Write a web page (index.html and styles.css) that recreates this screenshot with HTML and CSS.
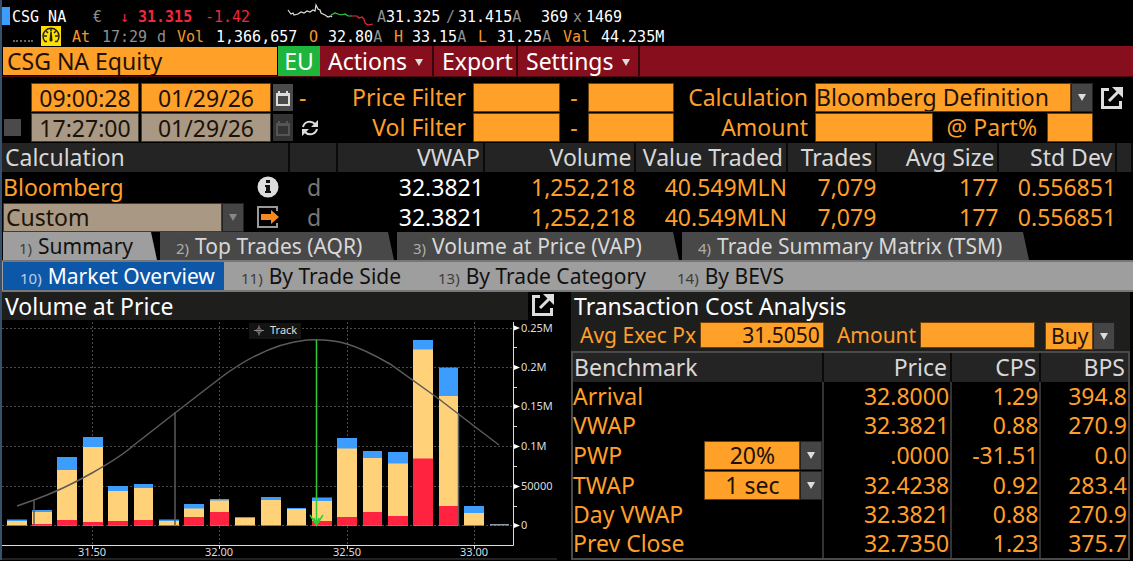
FILE: index.html
```
<!DOCTYPE html>
<html lang="en">
<head>
  <meta charset="UTF-8" />
  <title>CSG NA Equity - VWAP</title>
  <link rel="stylesheet" href="styles.css">
</head>
<body>
  <div class="app">
    <!-- Quote header -->
    <header class="quote">
      <div class="quote-line line-1">
        <span class="marker"></span>
        <span class="white">CSG NA</span>
        <span>€</span>
        <span class="red">↓</span>
        <b class="red">31.315</b>
        <span class="red">-1.42</span>
        <svg class="spark" width="86" height="24" viewBox="287 3 86 24" fill="none" stroke-width="1.2">
          <path stroke="#ddd" d="M288 10l3 4 2-1 1 2 4-1 3-2 3 1 3-2 3 1 3-2 2 1 1-6 2 4 2 1 1 3 4 2 3 2 3-1 1 1"/>
          <path stroke="#2fd04a" d="M331 15l4-2 3 1 3 1 4-1 3 2 4 0"/>
          <path stroke="#f0273f" d="M352 16h5l2 2 3-1 2 2 1 4 3 2 5-1"/>
        </svg>
        <span>A<span class="white">31.325</span></span>
        <span>/</span>
        <span><span class="white">31.415</span>A</span>
        <span class="white">369</span>
        <span>x</span>
        <span class="white">1469</span>
      </div>
      <div class="quote-line line-2">
        <span class="dots"></span>
        <svg width="20" height="20" viewBox="0 0 20 20">
          <path fill="#ffdf00" d="M0 0h20v20H0z"/>
          <path fill="none" stroke="#222" stroke-width="1.500" d="M6 15.500H4A8 8 0 1 1 16 15.500H14"/>
          <path fill="none" stroke="#222" stroke-width="1.500" d="M3 10h3M14 10h3M5 5l2 2M15 5l-2 2M10 2.500v3"/>
          <path fill="#222" d="M9.300 6h1.400l.8 8a1.500 1.500 0 0 1-3 0z"/>
        </svg>
        <span class="orange">At</span>
        <span>17:29</span>
        <span>d</span>
        <span class="orange">Vol</span>
        <span class="white">1,366,657</span>
        <span class="orange">O</span>
        <span><span class="white">32.80</span>A</span>
        <span class="orange">H</span>
        <span><span class="white">33.15</span>A</span>
        <span class="orange">L</span>
        <span><span class="white">31.25</span>A</span>
        <span class="orange">Val</span>
        <span class="white">44.235M</span>
      </div>
    </header>

    <!-- Toolbar -->
    <nav class="toolbar">
      <input class="security" type="text" value="CSG NA Equity" aria-label="Security">
      <button type="button" class="region">EU</button>
      <button type="button" class="menu menu-actions">Actions <i class="caret"></i></button>
      <button type="button" class="menu menu-export">Export</button>
      <button type="button" class="menu menu-settings">Settings <i class="caret"></i></button>
    </nav>

    <!-- Filters -->
    <form class="filters">
      <span></span>
      <input class="center" type="text" value="09:00:28" aria-label="Start time">
      <input class="center" type="text" value="01/29/26" aria-label="Start date">
      <button type="button" class="cal" aria-label="Start calendar">
        <svg width="16" height="18" viewBox="0 0 16 18" fill="none" stroke="currentColor" stroke-width="2"><path d="M2 6h12v10H2zM4 2v4M12 2v4M1 5h14"/></svg>
      </button>
      <span class="dash-left">-</span>
      <label for="priceMin">Price Filter</label>
      <input type="text" id="priceMin">
      <span class="dash">-</span>
      <input type="text" aria-label="Price filter maximum">
      <label for="calcType">Calculation</label>
      <div class="drop">
        <select id="calcType"><option>Bloomberg Definition</option></select>
        <span class="arrow"><i class="caret"></i></span>
      </div>
      <a class="popout" href="#" aria-label="Open">
        <svg width="24" height="24" viewBox="0 0 24 24"><path fill="none" stroke="#ddd" stroke-width="3" d="M9 3.500H2.500v18h18V15M9 15L18 6"/><path fill="#ddd" d="M12 1h11v11z"/></svg>
      </a>

      <input type="checkbox" aria-label="Use end time">
      <input class="center muted" type="text" value="17:27:00" aria-label="End time">
      <input class="center muted" type="text" value="01/29/26" aria-label="End date">
      <button type="button" class="cal off" aria-label="End calendar">
        <svg width="16" height="18" viewBox="0 0 16 18" fill="none" stroke="currentColor" stroke-width="2"><path d="M2 6h12v10H2zM4 2v4M12 2v4M1 5h14"/></svg>
      </button>
      <button type="button" class="refresh" aria-label="Refresh">
        <svg width="18" height="18" viewBox="0 0 18 18"><path fill="none" stroke="#ddd" stroke-width="2" d="M2 8A7 7 0 0 1 14 5M16 10A7 7 0 0 1 4 13"/><path fill="#ddd" d="M17 1v7h-7zM1 17v-7h7z"/></svg>
      </button>
      <label for="volMin">Vol Filter</label>
      <input type="text" id="volMin">
      <span class="dash">-</span>
      <input type="text" aria-label="Volume filter maximum">
      <label for="amount">Amount</label>
      <div class="amounts">
        <input type="text" id="amount">
        <label for="part">@ Part%</label>
        <input type="text" id="part">
      </div>
      <span></span>
    </form>

    <!-- VWAP results -->
    <table class="results">
      <colgroup>
        <col class="c-name"><col class="c-flag"><col class="c-vwap"><col class="c-vol"><col class="c-value"><col class="c-trades"><col class="c-avg"><col class="c-dev"><col>
      </colgroup>
      <thead>
        <tr>
          <th>Calculation</th><th></th><th>VWAP</th><th>Volume</th><th>Value Traded</th><th>Trades</th><th>Avg Size</th><th>Std Dev</th><th></th>
        </tr>
      </thead>
      <tbody>
        <tr>
          <td>
            <div class="name-cell">
              <span>Bloomberg</span>
              <svg width="22" height="22" viewBox="0 0 22 22"><circle cx="11" cy="11" r="10.500" fill="#ddd"/><path fill="#111" d="M9 4h4v3H9zM8 9h5v6h1v2H8v-2h1v-4H8z"/></svg>
            </div>
          </td>
          <td>d</td><td class="white">32.3821</td><td>1,252,218</td><td>40.549MLN</td><td>7,079</td><td>177</td><td>0.556851</td><td></td>
        </tr>
        <tr>
          <td>
            <div class="name-cell">
              <div class="drop muted-drop">
                <select aria-label="Custom calculation"><option>Custom</option></select>
                <span class="arrow"><i class="caret"></i></span>
              </div>
              <svg width="22" height="22" viewBox="0 0 22 22"><path fill="none" stroke="#999" stroke-width="2" d="M20 5V1H1v20h19v-4"/><path fill="#f58a1f" d="M4 8h10V4l8 7-8 7v-4H4z"/></svg>
            </div>
          </td>
          <td>d</td><td class="white">32.3821</td><td>1,252,218</td><td>40.549MLN</td><td>7,079</td><td>177</td><td>0.556851</td><td></td>
        </tr>
      </tbody>
    </table>

    <!-- Tabs -->
    <nav class="tabs">
      <a class="tab t1 active" href="#"><small>1)</small>Summary</a>
      <a class="tab t2" href="#"><small>2)</small>Top Trades (AQR)</a>
      <a class="tab t3" href="#"><small>3)</small>Volume at Price (VAP)</a>
      <a class="tab t4" href="#"><small>4)</small>Trade Summary Matrix (TSM)</a>
    </nav>
    <nav class="subtabs">
      <a class="s1 active" href="#"><small>10)</small>Market Overview</a>
      <a class="s2" href="#"><small>11)</small>By Trade Side</a>
      <a class="s3" href="#"><small>13)</small>By Trade Category</a>
      <a class="s4" href="#"><small>14)</small>By BEVS</a>
    </nav>

    <main class="panels">
      <!-- Volume at price chart -->
      <section class="panel-chart">
        <div class="chart-head">
          <h2>Volume at Price</h2>
          <a class="popout" href="#" aria-label="Open chart">
            <svg width="24" height="24" viewBox="0 0 24 24"><path fill="none" stroke="#ddd" stroke-width="3" d="M9 3.500H2.500v18h18V15M9 15L18 6"/><path fill="#ddd" d="M12 1h11v11z"/></svg>
          </a>
        </div>
        <svg class="chart" viewBox="2 320 555 238">
          <path class="grid-line" d="M2 328.500H513M2 367.500H513M2 406.500H513M2 446.500H513M2 486.500H513M2 525.500H513M92.500 322V545M219.500 322V545M347.500 322V545M474.500 322V545"/>
          <!-- bars: blue, then yellow, then red on top -->
          <path fill="#3c9dff" d="M7 519.500h20v6h-20zM32 510h20v15.500h-20zM57 457h20v68.500h-20zM83 437h20v88.500h-20zM108 486h20v39.500h-20zM134 484h19v41.500h-19zM159 519.500h20v6h-20zM184 504h20v21.500h-20zM210 499h19v26.500h-19zM235 517h20v8.500h-20zM261 497h20v28.500h-20zM287 508h19v17.500h-19zM312 497.500h20v28h-20zM337 438h20v87.500h-20zM363 451h19v74.500h-19zM388 452h20v73.500h-20zM413 340h20v185.500h-20zM439 367.500h19v158h-19zM464 506h20v19.500h-20z"/>
          <path fill="#8e9cae" d="M490 524h19v1.500h-19z"/>
          <path fill="#ffd178" d="M7 521h20v4.500h-20zM32 512h20v13.500h-20zM57 470h20v55.500h-20zM83 447h20v78.500h-20zM108 491h20v34.500h-20zM134 488h19v37.500h-19zM159 521h20v4.500h-20zM184 508.500h20v17h-20zM210 500.500h19v25h-19zM235 518h20v7.500h-20zM261 500h20v25.500h-20zM287 509h19v16.500h-19zM312 501h20v24.500h-20zM337 448.500h20v77h-20zM363 458h19v67.500h-19zM388 463.500h20v62h-20zM413 349.500h20v176h-20zM439 396h19v129.500h-19zM464 513h20v12.500h-20z"/>
          <path fill="#ff2340" d="M7 525h20v.5h-20zM32 524h20v1.500h-20zM57 520h20v5.500h-20zM83 522h20v3.500h-20zM108 521h20v4.500h-20zM134 520h19v5.500h-19zM159 525h20v.5h-20zM184 517h20v8.500h-20zM210 512h19v13.500h-19zM235 525h20v.5h-20zM261 525h20v.5h-20zM287 525h19v.5h-19zM312 521h20v4.500h-20zM337 517h20v8.500h-20zM363 512h19v13.500h-19zM388 516h20v9.500h-20zM413 458.500h20v67h-20zM439 506h19v19.500h-19zM464 525h20v.5h-20z"/>
          <path class="curve" d="M17 506L34 500Q62 490 92 473T134 445L175 413 219 379Q265 344 307 340 330 339 347 344T390 364L439 399 474 426 499 445"/>
          <path class="curve" d="M34 500V525M175 412V525M458.500 413V525"/>
          <path fill="none" stroke="#2fca35" stroke-width="1.500" d="M316.500 340V525M310 515l6.500 10 6.500-10M314 518l2.500 7 2.500-7"/>
          <path class="axis" d="M2 545.500H513.500V322M513 347.500h4M513 387.500h4M513 426.500h4M513 466.500h4M513 506.500h4M92.500 545v4M219.500 545v4M347.500 545v4M474.500 545v4"/>
          <path fill="#fff" d="M514 325.500l6 2.500-6 2.500zM514 365l6 2.500-6 2.500zM514 404l6 2.500-6 2.500zM514 444l6 2.500-6 2.500zM514 484l6 2.500-6 2.500zM514 523l6 2.500-6 2.500z"/>
          <rect x="249" y="323" width="52" height="16" fill="#141414"/>
          <path fill="none" stroke="#888" d="M254 330.500h10M259 325.500v10M256 330.500l3-3 3 3-3 3z"/>
          <g class="chart-text">
            <text x="270" y="334">Track</text>
            <text x="521" y="332">0.25M</text>
            <text x="521" y="371">0.2M</text>
            <text x="521" y="410">0.15M</text>
            <text x="521" y="450">0.1M</text>
            <text x="521" y="490">50000</text>
            <text x="521" y="529">0</text>
          </g>
          <g class="chart-text middle">
            <text x="92" y="556">31.50</text>
            <text x="219" y="556">32.00</text>
            <text x="347" y="556">32.50</text>
            <text x="474" y="556">33.00</text>
          </g>
        </svg>
      </section>

      <!-- Transaction cost analysis -->
      <section class="panel-tca">
        <h2>Transaction Cost Analysis</h2>
        <form class="tca-form">
          <label for="execPx">Avg Exec Px</label>
          <input class="px" type="text" id="execPx" value="31.5050">
          <label for="tcaAmount">Amount</label>
          <input class="amt" type="text" id="tcaAmount">
          <div class="drop side">
            <select aria-label="Side"><option>Buy</option></select>
            <span class="arrow"><i class="caret"></i></span>
          </div>
        </form>
        <table class="tca">
          <colgroup><col class="c-bench"><col class="c-price"><col class="c-cps"><col></colgroup>
          <thead>
            <tr><th>Benchmark</th><th>Price</th><th>CPS</th><th>BPS</th></tr>
          </thead>
          <tbody>
            <tr><td>Arrival</td><td>32.8000</td><td>1.29</td><td>394.8</td></tr>
            <tr><td>VWAP</td><td>32.3821</td><td>0.88</td><td>270.9</td></tr>
            <tr class="pick">
              <td>
                <div class="bench-cell">
                  <label for="pwp">PWP</label>
                  <div class="drop">
                    <select id="pwp"><option>20%</option></select>
                    <span class="arrow"><i class="caret"></i></span>
                  </div>
                </div>
              </td>
              <td>.0000</td><td>-31.51</td><td>0.0</td>
            </tr>
            <tr class="pick">
              <td>
                <div class="bench-cell">
                  <label for="twap">TWAP</label>
                  <div class="drop">
                    <select id="twap"><option>1 sec</option></select>
                    <span class="arrow"><i class="caret"></i></span>
                  </div>
                </div>
              </td>
              <td>32.4238</td><td>0.92</td><td>283.4</td>
            </tr>
            <tr><td>Day VWAP</td><td>32.3821</td><td>0.88</td><td>270.9</td></tr>
            <tr><td>Prev Close</td><td>32.7350</td><td>1.23</td><td>375.7</td></tr>
          </tbody>
        </table>
      </section>
    </main>
  </div>
</body>
</html>
```
FILE: styles.css
```
* {
  box-sizing: border-box;
}
body {
  margin: 0;
  background: #000;
  color: #ff9f2a;
  font-family: "Noto Sans", sans-serif;
  font-size: 23px;
  line-height: 29px;
}
.app {
  border-left: 2px solid #36506e;
}
a {
  color: inherit;
  text-decoration: none;
}
input,
select,
button {
  font: inherit;
  margin: 0;
  border: 0;
  border-radius: 0;
  padding: 0;
  min-width: 0;
}
input[type="text"],
select {
  background: #ffa028;
  color: #1c1206;
  border: 1px solid #6b3f0c;
  height: 29px;
  line-height: 27px;
  width: 100%;
}
h2 {
  margin: 0;
  font-size: 23px;
  font-weight: normal;
  line-height: 29px;
  color: #fff;
  padding-left: 3px;
  background: #1e1e1d;
}
svg {
  display: block;
}
.white { color: #fff; }
.orange { color: #f7962b; }
.red { color: #f0273f; }

/* quote header */
.quote {
  font-family: "DejaVu Sans Mono", monospace;
  font-size: 15px;
  line-height: 20px;
  color: #8f8f8f;
  height: 46px;
  padding-top: 7px;
}
.quote-line {
  display: grid;
  height: 20px;
  white-space: nowrap;
}
.line-1 {
  grid-template-columns: 10px 81px 27px 18px 67px 82px 90px 69px 12px 83px 32px 13px auto;
}
.line-2 {
  grid-template-columns: 39px 31px 30px 55px 20px 39px 93px 19px 66px 18px 66px 19px 66px 38px auto;
}
.line-2 svg {
  margin-top: -1px;
}
.marker {
  width: 8px;
  height: 18px;
  background: #3c9dff;
}
.spark {
  margin-top: -4px;
}
.dots {
  width: 20px;
  margin-left: 11px;
  border-bottom: 2px dotted #666;
  height: 15px;
}

/* toolbar */
.toolbar {
  display: flex;
  background: #870f1d;
  border-bottom: 1px solid #4d0a12;
  height: 31px;
}
.toolbar input.security {
  width: 276px;
  height: 30px;
  border: 1px solid #000;
  padding-left: 4px;
}
.toolbar button {
  color: #fff;
  background: #870f1d;
  text-align: left;
  line-height: 29px;
}
.toolbar .region {
  width: 42px;
  background: #1db53c;
  text-align: center;
}
.toolbar .menu {
  border-right: 2px solid #35060b;
  padding-left: 8px;
}
.menu-actions { width: 114px; }
.menu-export { width: 84px; }
.menu-settings { width: 122px; }
.caret {
  display: inline-block;
  border-left: 4px solid transparent;
  border-right: 4px solid transparent;
  border-top: 7px solid #ddd;
}
.menu .caret {
  margin-left: 2px;
  vertical-align: 4px;
}

/* filters */
.filters {
  display: grid;
  grid-template-columns: 27px 108px 130px 20px 28px 146fr 87px 24px 86px 137fr 278px 38px;
  column-gap: 2px;
  row-gap: 1px;
  padding: 6px 0 1px;
  align-items: center;
}
.filters label {
  text-align: right;
  padding-right: 5px;
  white-space: nowrap;
}
.filters input.center {
  text-align: center;
}
.filters input.muted {
  background: #a89884;
  border-color: #443c30;
}
.filters input[type="checkbox"] {
  appearance: none;
  width: 17px;
  height: 17px;
  margin-left: 2px;
  background: #4a4a4a;
}
.cal {
  background: #4a4a4a;
  color: #ddd;
  height: 27px;
  padding-left: 2px;
}
.cal.off {
  background: #333;
  color: #555;
}
.refresh {
  background: none;
  padding-left: 6px;
}
.dash {
  text-align: center;
}
.dash-left {
  padding-left: 4px;
}
.popout {
  padding-left: 5px;
}
.amounts {
  display: grid;
  grid-template-columns: 118px 1fr 46px;
}
.amounts label {
  padding-right: 10px;
}

/* drop-downs */
.drop {
  display: flex;
}
.drop select {
  appearance: none;
  flex: 1;
}
.arrow {
  width: 22px;
  background: #454545;
  border: 1px solid #222;
  display: flex;
  align-items: center;
  justify-content: center;
}

/* tables */
table {
  width: 100%;
  table-layout: fixed;
  border-collapse: separate;
  border-spacing: 0;
}
th,
td {
  padding: 0 1px;
  height: 29px;
  line-height: 29px;
  text-align: right;
  white-space: nowrap;
  font-weight: normal;
}
th {
  background: #242424;
  color: #d8d8d8;
  padding-right: 3px;
  border-right: 2px solid #0a0a0a;
}
th:first-child,
td:first-child {
  text-align: left;
}
.results th:first-child {
  padding-left: 3px;
}
.results tbody td:nth-child(2) {
  text-align: center;
  color: #777;
}
.c-name { width: 25.5%; }
.c-flag { width: 4.2%; }
.c-vwap { width: 13.0%; }
.c-vol { width: 13.4%; }
.c-value { width: 13.4%; }
.c-trades { width: 7.9%; }
.c-avg { width: 10.8%; }
.c-dev { width: 10.4%; }
.results tbody td {
  height: 30px;
}
.results tbody td:first-child {
  padding: 0;
}
.name-cell {
  display: flex;
  justify-content: space-between;
  align-items: center;
  padding: 0 11px 0 1px;
}
.muted-drop {
  width: 241px;
}
.muted-drop select {
  background: #a89884;
  border-color: #443c30;
  padding-left: 2px;
}
.muted-drop .caret {
  border-top-color: #888;
}

/* tabs */
.tabs {
  display: flex;
  gap: 3px;
  height: 28px;
  padding-left: 1px;
  font-size: 21px;
  line-height: 28px;
}
small {
  font-size: 15px;
  opacity: .7;
  margin-right: 6px;
}
.tab {
  background: #484848;
  color: #d8d8d8;
  padding-left: 16px;
  white-space: nowrap;
  clip-path: polygon(0 0, calc(100% - 6px) 0, 100% 100%, 0 100%);
}
.tab.active {
  background: #9e9e9e;
  color: #111;
}
.t1 { width: 154px; }
.t2 { width: 234px; }
.t3 { width: 282px; }
.t4 { width: 347px; }
.subtabs {
  display: flex;
  background: #9e9e9e;
  border-top: 2px solid #777;
  border-bottom: 2px solid #777;
  color: #111;
  font-size: 21px;
  line-height: 28px;
  height: 32px;
  padding-left: 1px;
}
.subtabs a {
  padding-left: 17px;
  white-space: nowrap;
}
.subtabs a.active {
  background: #0d57a8;
  color: #fff;
}
.s1 { width: 221px; }
.s2 { width: 197px; }
.s3 { width: 239px; }

/* panels */
.panels {
  display: grid;
  grid-template-columns: 555fr 559fr;
  column-gap: 14px;
  padding-right: 3px;
}
.chart-head {
  display: grid;
  grid-template-columns: 1fr 29px;
  height: 28px;
}
.panels h2 {
  line-height: 28px;
}
.chart-head .popout {
  padding: 1px 0 0 3px;
}
.chart {
  width: 100%;
  border-bottom: 2px solid #222;
}
.grid-line {
  stroke: #4c4c4c;
  stroke-dasharray: 2 2;
}
.curve {
  fill: none;
  stroke: #5b5b5b;
  stroke-width: 1.5;
}
.axis {
  fill: none;
  stroke: #ddd;
}
.chart-text {
  font-size: 11px;
  fill: #ddd;
}
.middle {
  text-anchor: middle;
}
.tca-form {
  display: flex;
  align-items: flex-start;
  background: #1e1e1d;
  font-size: 21px;
  height: 31px;
  padding: 2px 0 0 9px;
}
.tca-form label {
  white-space: nowrap;
  flex: 1 0 auto;
  line-height: 26px;
}
.tca-form input[type="text"] {
  height: 26px;
  line-height: 24px;
  margin-right: 13px;
}
.tca-form input.px {
  width: 124px;
  text-align: right;
  padding-right: 3px;
}
.tca-form input.amt {
  width: 115px;
  margin-right: 10px;
}
.tca-form .side {
  width: 70px;
  margin-right: 15px;
}
.side select {
  height: 28px;
  padding-left: 5px;
}
.tca {
  border: 2px solid #4a4a4a;
}
.tca td {
  border-right: 2px solid #333;
}
.tca .pick td {
  height: 30px;
}
.tca td:first-child {
  padding: 0;
}
.tca th:last-child,
.tca td:last-child {
  border-right: 0;
}
.c-bench { width: 45.3%; }
.c-price { width: 23%; }
.c-cps { width: 16.1%; }
.bench-cell {
  display: flex;
  justify-content: space-between;
}
.bench-cell .drop {
  width: 118px;
}
.bench-cell select {
  text-align: center;
  text-align-last: center;
}
```
